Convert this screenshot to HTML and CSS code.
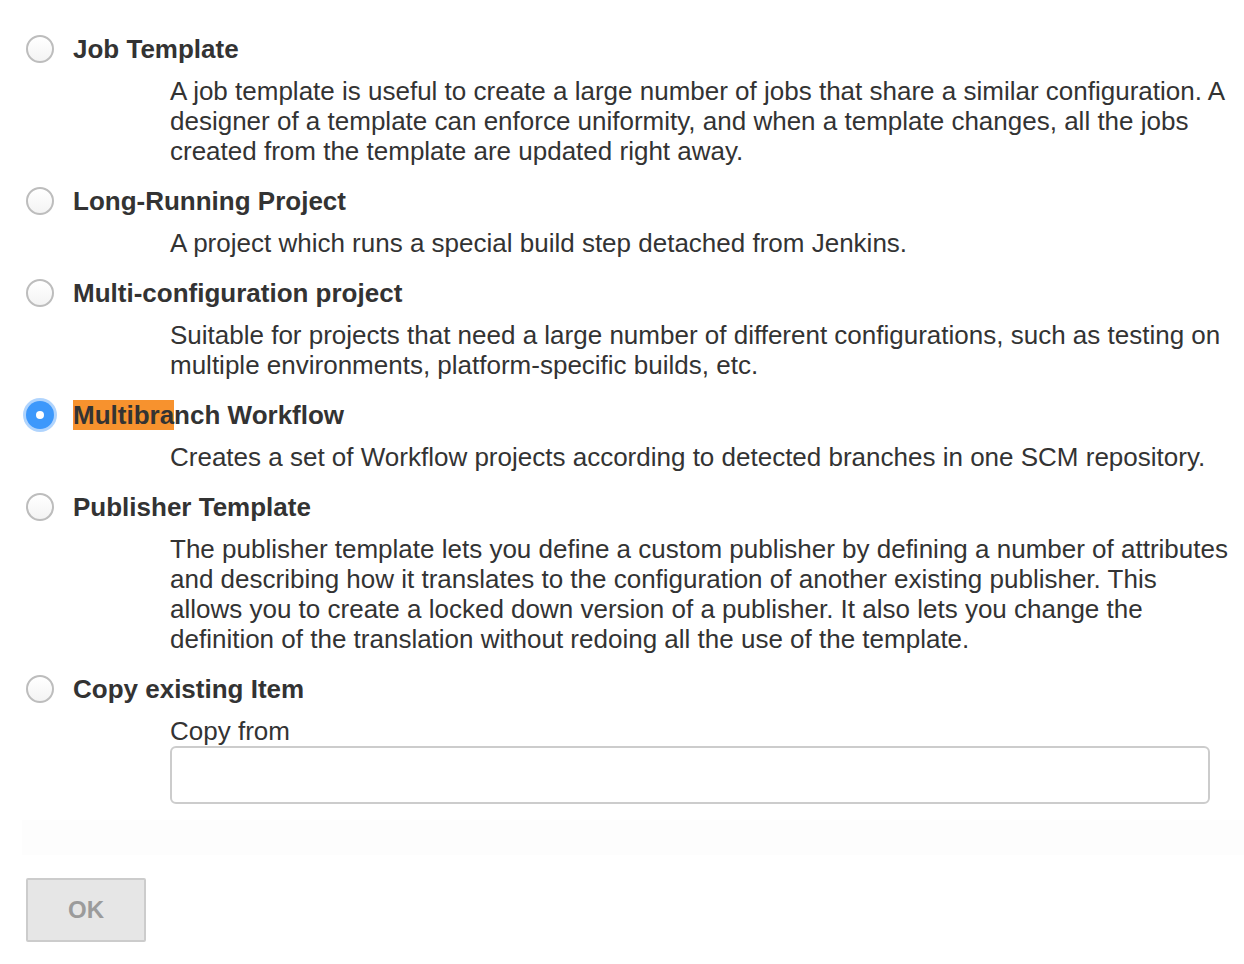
FILE: index.html
```html
<!DOCTYPE html>
<html>
<head>
<meta charset="utf-8">
<link rel="stylesheet" href="styles.css">
</head>
<body>
<div class="page">
  <div class="option">
    <div class="option-head"><span class="radio"></span><span class="title">Job Template</span></div>
    <div class="desc">A job template is useful to create a large number of jobs that share a similar configuration. A designer of a template can enforce uniformity, and when a template changes, all the jobs created from the template are updated right away.</div>
  </div>
  <div class="option">
    <div class="option-head"><span class="radio"></span><span class="title">Long-Running Project</span></div>
    <div class="desc">A project which runs a special build step detached from Jenkins.</div>
  </div>
  <div class="option">
    <div class="option-head"><span class="radio"></span><span class="title">Multi-configuration project</span></div>
    <div class="desc">Suitable for projects that need a large number of different configurations, such as testing on multiple environments, platform-specific builds, etc.</div>
  </div>
  <div class="option">
    <div class="option-head"><span class="radio checked"></span><span class="title"><span class="hl">Multibra</span>nch Workflow</span></div>
    <div class="desc">Creates a set of Workflow projects according to detected branches in one SCM repository.</div>
  </div>
  <div class="option">
    <div class="option-head"><span class="radio"></span><span class="title">Publisher Template</span></div>
    <div class="desc">The publisher template lets you define a custom publisher by defining a number of attributes and describing how it translates to the configuration of another existing publisher. This allows you to create a locked down version of a publisher. It also lets you change the definition of the translation without redoing all the use of the template.</div>
  </div>
  <div class="option">
    <div class="option-head"><span class="radio"></span><span class="title">Copy existing Item</span></div>
    <div class="copy">
      <div class="copy-label">Copy from</div>
      <input class="copy-input" type="text">
    </div>
  </div>
  <div class="faint-bar"></div>
  <button class="ok-btn" type="button">OK</button>
</div>
</body>
</html>
```

FILE: styles.css
```css
html, body {
  margin: 0;
  padding: 0;
  background: #ffffff;
}
body {
  font-family: "Liberation Sans", Arial, Helvetica, sans-serif;
  color: #333333;
}
.page {
  padding: 34px 11px 0 26px;
}
.option-head {
  display: flex;
  align-items: center;
  gap: 19px;
  height: 30px;
  font-size: 26px;
  line-height: 30px;
  font-weight: bold;
}
.radio {
  flex: none;
  width: 28px;
  height: 28px;
  box-sizing: border-box;
  border-radius: 50%;
  border: 2px solid #bdbdbd;
  background: linear-gradient(#ffffff, #f3f3f3);
  position: relative;
}
.radio.checked {
  border: none;
  background: #3d98fb;
  box-shadow: 0 0 0 3px rgba(80, 160, 250, 0.45);
}
.radio.checked::after {
  content: "";
  position: absolute;
  left: 10px;
  top: 10px;
  width: 8px;
  height: 8px;
  border-radius: 50%;
  background: #ffffff;
}
.hl {
  background: #f7922e;
}
.desc {
  margin: 12px 0 20px 144px;
  font-size: 26px;
  line-height: 30px;
}
.copy {
  margin: 12px 0 0 144px;
}
.copy-label {
  font-size: 26px;
  line-height: 30px;
}
.copy-input {
  display: block;
  box-sizing: border-box;
  width: 1040px;
  height: 58px;
  margin: 0;
  border: 2px solid #cccccc;
  border-radius: 6px;
  background: #ffffff;
  font-size: 26px;
  font-family: inherit;
}
.faint-bar {
  margin: 16px -11px 0 -4px;
  height: 35px;
  background: #fdfdfd;
}
.ok-btn {
  display: block;
  margin-top: 23px;
  width: 120px;
  height: 64px;
  box-sizing: border-box;
  border: 2px solid #cccccc;
  border-radius: 2px;
  background: #e6e6e6;
  color: #9b9b9b;
  font-family: inherit;
  font-size: 24px;
  font-weight: bold;
  padding: 0;
}
```
